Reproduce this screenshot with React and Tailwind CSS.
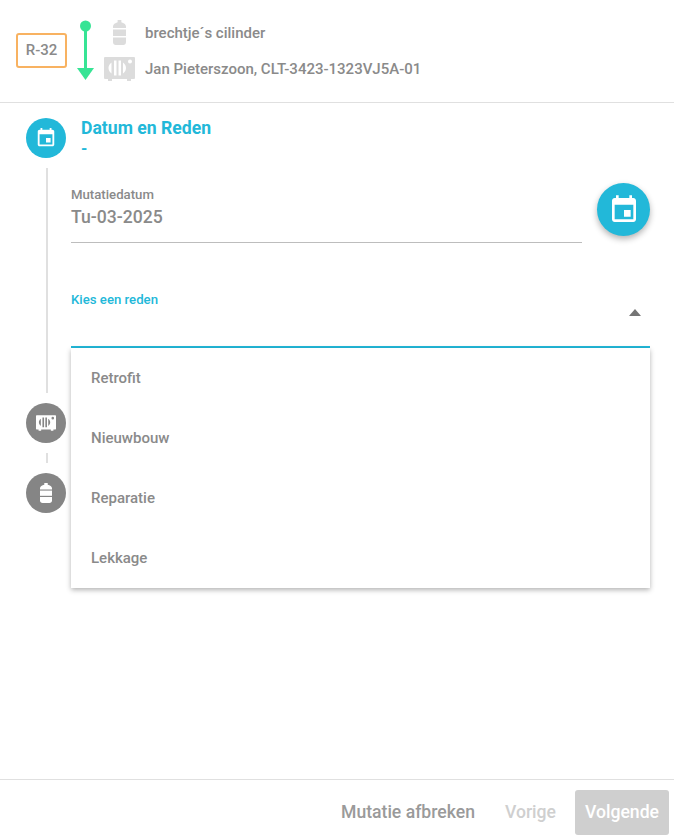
import React from "react";

const EventIcon = ({ className }) => (
  <svg viewBox="0 0 24 24" className={className} fill="currentColor">
    <path d="M17 12h-5v5h5v-5zM16 1v2H8V1H6v2H5c-1.11 0-1.99.9-1.99 2L3 19c0 1.1.89 2 2 2h14c1.1 0 2-.9 2-2V5c0-1.1-.9-2-2-2h-1V1h-2zm3 18H5V8h14v11z" />
  </svg>
);

const CylinderIcon = ({ className }) => (
  <svg viewBox="0 0 14 25" preserveAspectRatio="none" className={className} fill="currentColor">
    <path d="M5 0h4v2.200c2.600.7 5 2.200 5 4.300v1.500H0V6.500C0 4.400 2.400 2.900 5 2.200z" />
    <rect x="0" y="9.500" width="14" height="6.500" />
    <path d="M0 17.500h14V22c0 1.800-1.200 3-3 3H3c-1.800 0-3-1.200-3-3z" />
  </svg>
);

const UnitIcon = ({ className }) => (
  <svg viewBox="0 0 31 24" className={className}>
    <path
      fill="currentColor"
      fillRule="evenodd"
      d="M1 0h29a1 1 0 0 1 1 1v20a1 1 0 0 1-1 1h-3v2h-4v-2H8v2H4v-2H1a1 1 0 0 1-1-1V1a1 1 0 0 1 1-1zm25 2.500a2 2 0 1 0 0 4 2 2 0 0 0 0-4zM7.500 5.500C5.500 7 4.500 9 4.500 11s1 4 3 5.500zm2.500-2v15h2.500v-15zm4.500 0v15H17v-15zm4.500 2v11c2-1.500 3-3.500 3-5.500s-1-4-3-5.500z"
    />
  </svg>
);

const reasons = ["Retrofit", "Nieuwbouw", "Reparatie", "Lekkage"];

const App = () => {
  return (
    <div className="h-[839px] w-[674px] flex flex-col bg-white overflow-hidden font-['Roboto',sans-serif] text-[#8a8a8a]">
      <header className="h-[103px] shrink-0 border-b border-[#e0e0e0] flex items-start">
        <div className="mt-[33px] ml-4 w-[51px] h-[35px] border-2 border-[#f8b261] rounded-[3px] flex items-center justify-center text-[15px] font-medium">
          R-32
        </div>
        <svg viewBox="0 0 18 60" className="mt-[20px] ml-[9px] w-[18px] h-[60px] text-[#37e495]" fill="currentColor">
          <circle cx="9.500" cy="6" r="5.500" />
          <rect x="8" y="8" width="3" height="42" />
          <polygon points="1,48 18,48 9.500,60" />
        </svg>
        <div className="ml-[10px] mt-[20px] flex flex-col">
          <div className="h-[25px] flex items-center">
            <div className="w-[31px] flex justify-center">
              <CylinderIcon className="w-[13px] h-[25px] text-[#dcdcdc]" />
            </div>
            <span className="ml-[10px] mt-0.5 text-[15px] font-medium">brechtje´s cilinder</span>
          </div>
          <div className="h-[25px] mt-[11px] flex items-center">
            <UnitIcon className="w-[31px] h-6 text-[#dcdcdc]" />
            <span className="ml-[10px] mt-0.5 text-[15px] font-medium">Jan Pieterszoon, CLT-3423-1323VJ5A-01</span>
          </div>
        </div>
      </header>

      <main className="flex-1 flex min-h-0">
        <div className="w-[71px] shrink-0 pl-[26px] pt-[15px]">
          <div className="w-10 flex flex-col items-center">
            <div className="w-10 h-10 rounded-full bg-[#22b8d9] text-white flex items-center justify-center">
              <EventIcon className="w-[22px] h-[22px]" />
            </div>
            <div className="w-0.5 h-[225px] mt-[10px] ml-0.5 bg-[#e0e0e0]" />
            <div className="w-10 h-10 mt-[10px] rounded-full bg-[#858585] text-white flex items-center justify-center">
              <UnitIcon className="w-5 h-4" />
            </div>
            <div className="w-0.5 h-[10px] mt-[10px] ml-0.5 bg-[#e0e0e0]" />
            <div className="w-10 h-10 mt-[10px] rounded-full bg-[#858585] text-white flex items-center justify-center">
              <CylinderIcon className="w-3 h-5" />
            </div>
          </div>
        </div>

        <div className="flex-1 pr-6 pt-[13px]">
          <div className="ml-[10px] text-[#22b8d9] font-bold">
            <div className="text-[17.6px] leading-6">Datum en Reden</div>
            <div className="text-base leading-[18px]">-</div>
          </div>

          <div className="mt-[25px] flex items-start">
            <div className="flex-1 mt-[5px] h-[55px] border-b border-[#bdbdbd]">
              <div className="text-[13.2px] font-medium leading-[14px]">Mutatiedatum</div>
              <div className="text-[17.6px] font-medium leading-6 mt-[3px]">Tu-03-2025</div>
            </div>
            <button className="ml-[15px] w-[53px] h-[53px] rounded-full bg-[#22b8d9] text-white flex items-center justify-center shadow-[0_3px_6px_rgba(0,0,0,0.3)]">
              <EventIcon className="w-8 h-8" />
            </button>
          </div>

          <div className="relative mt-[50px]">
            <div className="h-[55px] border-b-2 border-[#22b8d9] flex items-start justify-between">
              <span className="text-[13.2px] font-medium leading-[14px] text-[#22b8d9]">Kies een reden</span>
              <div className="mt-[16px] mr-[9px] w-0 h-0 border-x-[6px] border-x-transparent border-b-[7px] border-b-[#757575]" />
            </div>
            <ul className="absolute left-0 right-0 top-[55px] bg-white shadow-[0_2px_5px_rgba(0,0,0,0.3)]">
              {reasons.map((reason) => (
                <li key={reason} className="h-[60px] pl-5 flex items-center text-[15px] font-medium">
                  {reason}
                </li>
              ))}
            </ul>
          </div>
        </div>
      </main>

      <footer className="h-[60px] shrink-0 border-t border-[#e0e0e0] flex items-start justify-end pt-[10px] pr-[5px]">
        <button className="h-[45px] text-[17.6px] font-medium text-[#9a9a9a]">Mutatie afbreken</button>
        <button className="h-[45px] ml-[30px] text-[17.6px] font-medium text-[#cfcfcf]">Vorige</button>
        <button className="h-[45px] w-[94px] ml-[19px] rounded-[3px] bg-[#cfcfcf] text-white text-[17.6px] font-medium">Volgende</button>
      </footer>
    </div>
  );
};

export default App;
